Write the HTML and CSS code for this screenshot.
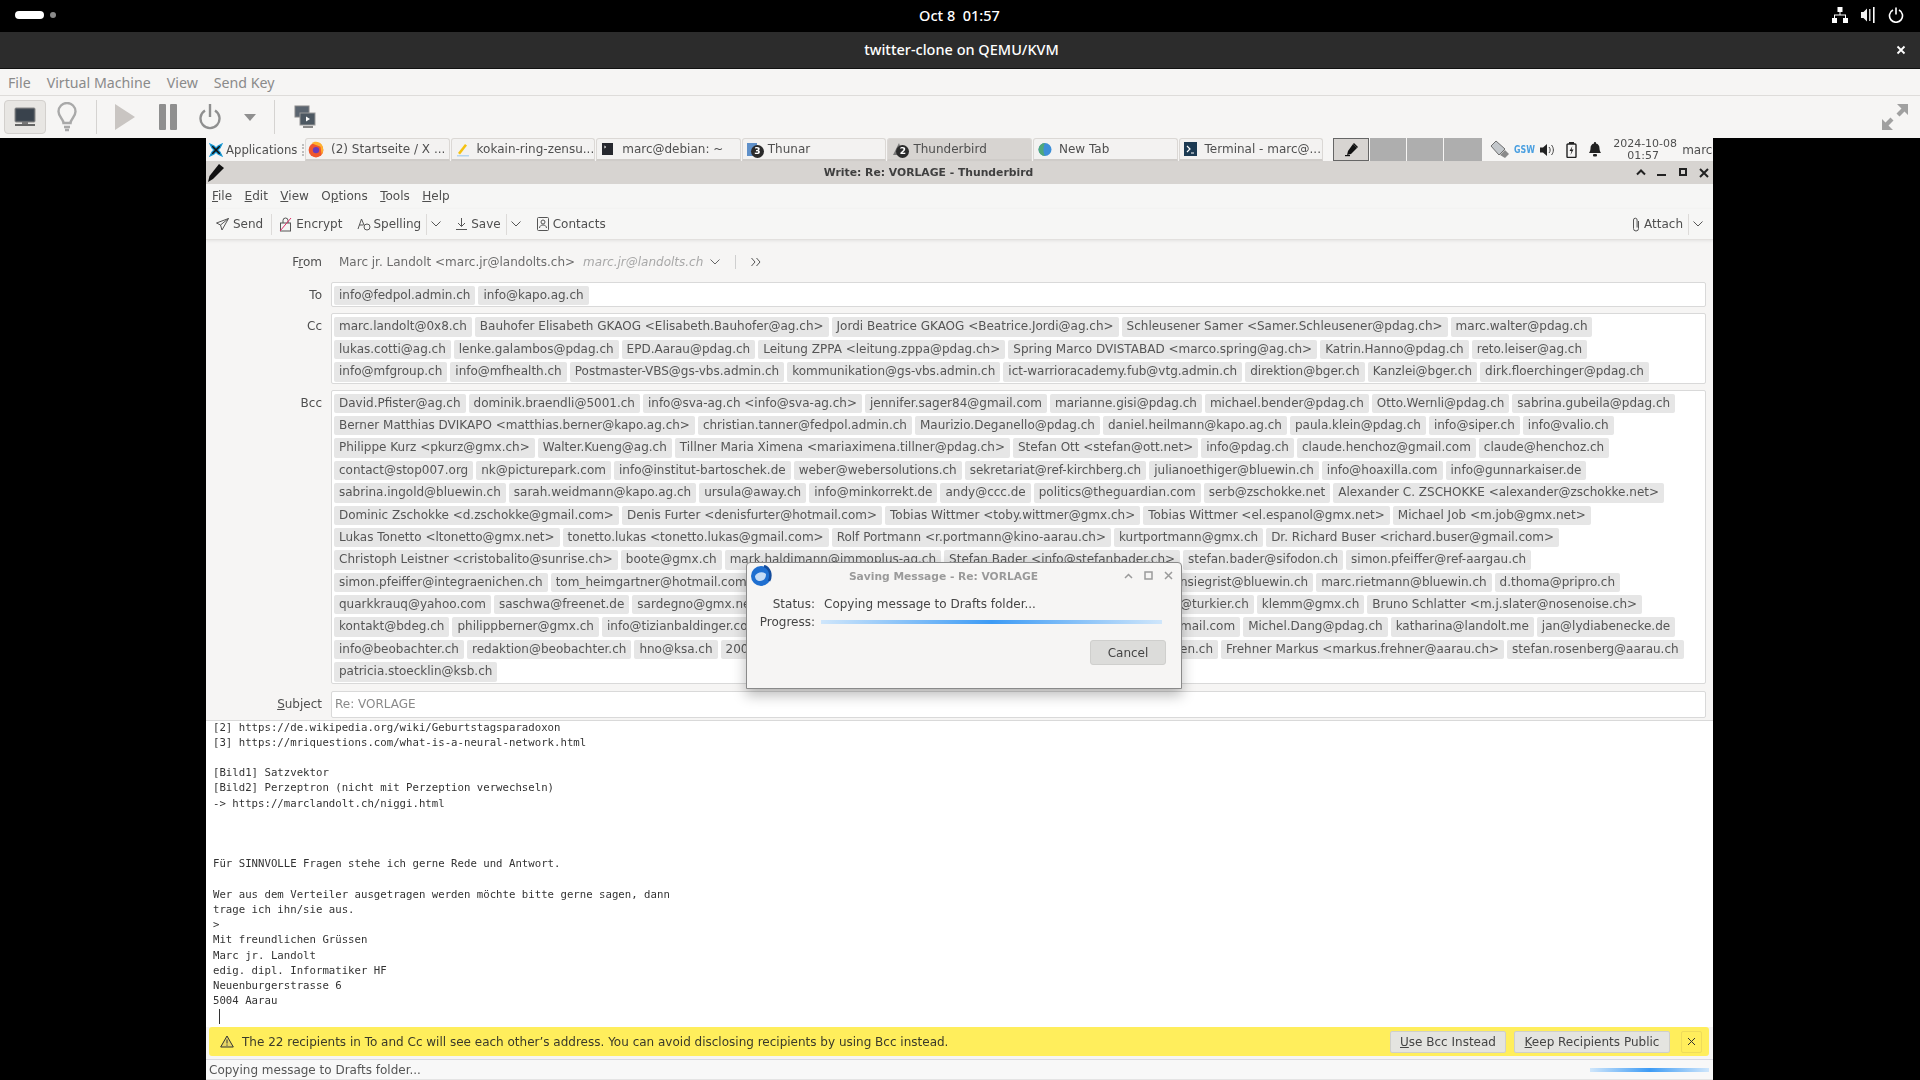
FILE: index.html
```html
<!DOCTYPE html>
<html>
<head>
    <title>twitter-clone on QEMU/KVM</title>
    <meta charset="UTF-8">
    <link rel="stylesheet" href="styles.css">
</head>
<body>
    <!-- host desktop -->
    <div class="top-bar">
        <div class="activities"><span class="pill"></span><span class="dot"></span></div>
        <div class="clock">Oct 8&nbsp; 01:57</div>
        <div class="status-icons">
            <svg width="16" height="16" viewBox="0 0 16 16" fill="#fff"><rect x="5.5" y="0" width="5" height="5"/><rect x="0" y="11" width="5" height="5"/><rect x="11" y="11" width="5" height="5"/><path d="M7.5 5h1v2.5h5.5V11h-1V8.5H3V11H2V7.5h5.5z"/></svg>
            <svg width="16" height="16" viewBox="0 0 16 16" fill="#fff"><path d="M1 5h2.5L7 1.500v13L3.500 11H1z" opacity=".95"/><rect x="9" y="2" width="1.5" height="12" opacity=".8"/><rect x="13" y="0" width="1.6" height="16"/></svg>
            <svg width="16" height="16" viewBox="0 0 16 16" fill="none" stroke="#fff" stroke-width="1.6"><path d="M5 3a6.5 6.5 0 1 0 6 0"/><path d="M8 0.5v7"/></svg>
        </div>
    </div>
    <div class="vm-title">
        <span>twitter-clone on QEMU/KVM</span>
        <svg class="vm-close" width="10" height="10" viewBox="0 0 10 10" stroke="#fff" stroke-width="1.8"><path d="M1.5 1.5l7 7M8.5 1.5l-7 7"/></svg>
    </div>
    <div class="vm-menu">
        <span>File</span><span>Virtual Machine</span><span>View</span><span>Send Key</span>
    </div>
    <div class="vm-toolbar">
        <div class="vm-btn active">
            <svg width="22" height="22" viewBox="0 0 22 22"><rect x="1" y="2" width="20" height="14" rx="1" fill="#4a5158" stroke="#888"/><rect x="2.5" y="3.5" width="17" height="11" fill="#39424c"/><rect x="8" y="16" width="6" height="2" fill="#777"/><rect x="1" y="18" width="20" height="2" fill="#666"/></svg>
        </div>
        <div class="vm-btn">
            <svg width="20" height="30" viewBox="0 0 20 30" fill="none" stroke="#a9a9a9" stroke-width="2.4"><path d="M6.5 21c0-4-5-6-5-11.5a8.5 8.5 0 0 1 17 0C18.5 15 13.5 17 13.5 21z"/><path d="M7 25h6M8 28h4"/></svg>
        </div>
        <span class="vm-sep first"></span>
        <div class="vm-btn wide">
            <svg width="20" height="26" viewBox="0 0 20 26" fill="#c9c5c2"><path d="M0 0l20 13L0 26z"/></svg>
        </div>
        <div class="vm-btn wide">
            <svg width="18" height="26" viewBox="0 0 18 26" fill="#8f8f8f"><rect width="7" height="26" rx="1"/><rect x="11" width="7" height="26" rx="1"/></svg>
        </div>
        <div class="vm-btn wide">
            <svg width="22" height="26" viewBox="0 0 22 26" fill="none" stroke="#8f8f8f" stroke-width="2.4"><path d="M6 6.5a9.500 9.500 0 1 0 10 0"/><path d="M11 0v13"/></svg>
        </div>
        <div class="vm-btn narrow">
            <svg width="12" height="7" viewBox="0 0 12 7" fill="#8f8f8f"><path d="M0 0h12L6 7z"/></svg>
        </div>
        <span class="vm-sep last"></span>
        <div class="vm-btn">
            <svg width="22" height="24" viewBox="0 0 22 24"><rect x="1" y="1" width="14" height="11" fill="#5b6570" stroke="#888"/><rect x="6" y="8" width="15" height="12" fill="#4d5862" stroke="#999"/><path d="M12 11.5l4 2.5-4 2.5z" fill="#fff"/><rect x="9" y="21" width="10" height="2" fill="#888"/></svg>
        </div>
        <svg class="vm-fullscreen" width="26" height="26" viewBox="0 0 26 26" fill="#a0a0a0"><path d="M15 0h11v11l-3.5-3.5-5 5-3-3 5-5zM0 26V15l3.5 3.5 5-5 3 3-5 5L11 26z"/></svg>
    </div>

    <!-- guest screen -->
    <div class="guest-row">
        <div class="guest">
            <div class="panel">
                <div class="launcher">
                    <svg width="14" height="14" viewBox="0 0 14 14"><path d="M1 1l4 2 2 2 2-2 4-2-2 4-2 2 2 2 2 4-4-2-2-2-2 2-4 2 2-4 2-2-2-2z" fill="#111" stroke="#1a9bd7" stroke-width="1.2"/></svg>
                    <span>Applications</span>
                    <span class="handle"></span>
                </div>
                <div class="tab">
                    <svg class="tab-icon firefox" width="16" height="17" viewBox="0 0 14 15"><circle cx="7" cy="8" r="6.5" fill="#f0562b"/><path d="M3 2c2-2 7-2 9 1 2 3 1.5 7 0 9l-1-7z" fill="#ffb02e"/><circle cx="7" cy="8" r="2.8" fill="#6b3bb8"/></svg>
                    <span>(2) Startseite / X ...</span>
                </div>
                <div class="tab">
                    <svg class="tab-icon" width="14" height="15" viewBox="0 0 14 15"><path d="M2 11l7-9 2 1.5-7 9z" fill="#f5c211"/><rect x="1" y="13" width="12" height="1.5" fill="#b5d4ef"/></svg>
                    <span>kokain-ring-zensu...</span>
                </div>
                <div class="tab">
                    <svg class="tab-icon" width="14" height="14" viewBox="0 0 14 14"><rect x="1" y="1" width="11" height="12" fill="#26282e"/><path d="M3 4l2 1-2 1" stroke="#ccc" fill="none"/></svg>
                    <span>marc@debian: ~</span>
                </div>
                <div class="tab">
                    <svg class="tab-icon" width="12" height="15" viewBox="0 0 12 15"><rect y="1" width="10" height="13" fill="#5f90c9"/></svg>
                    <span class="tab-badge">3</span>
                    <span>Thunar</span>
                </div>
                <div class="tab current">
                    <svg class="tab-icon" width="12" height="15" viewBox="0 0 12 15"><path d="M1 13L7 1l4 12z" fill="#777"/></svg>
                    <span class="tab-badge">2</span>
                    <span>Thunderbird</span>
                </div>
                <div class="tab">
                    <svg class="tab-icon" width="14" height="15" viewBox="0 0 14 15"><circle cx="7" cy="7.5" r="6.5" fill="#3d8fd8"/><path d="M7 1a6.5 6.5 0 0 0 0 13c-2-3-2-9 0-13z" fill="#4fa87a"/></svg>
                    <span>New Tab</span>
                </div>
                <div class="tab">
                    <svg class="tab-icon" width="14" height="14" viewBox="0 0 14 14"><rect width="13" height="14" fill="#1c3a52"/><path d="M3 4l3 3-3 3" stroke="#fff" fill="none" stroke-width="1.2"/><path d="M7 11h3" stroke="#fff"/></svg>
                    <span>Terminal - marc@...</span>
                </div>
                <div class="workspaces">
                    <div class="ws current">
                        <svg width="15" height="15" viewBox="0 0 15 15" fill="#111"><path d="M9 2l4 4-6 6-4 1 1-4z"/><path d="M10 1l4 4-1 1-4-4z"/><rect x="1" y="13" width="5" height="1.2"/></svg>
                    </div>
                    <div class="ws"></div>
                    <div class="ws"></div>
                    <div class="ws last"></div>
                </div>
                <div class="tray">
                    <svg class="tray-usb" width="20" height="19" viewBox="0 0 20 19"><path d="M1 6l5-5 9 8-6 6z" fill="#c3c7cb" stroke="#6f6f6f"/><path d="M10 15l5-5 4 4-4 4z" fill="#8a8a8a"/></svg>
                    <span class="gsw">GSW</span>
                    <svg class="tray-sound" width="15" height="14" viewBox="0 0 15 14"><path d="M0 4.5h3L7 1v12L3 9.500H0z" fill="#222"/><path d="M9 4c1.5 1.5 1.5 4.500 0 6M11.500 2c2.5 3 2.5 7 0 10" stroke="#444" fill="none"/></svg>
                    <svg class="tray-batt" width="11" height="16" viewBox="0 0 11 16"><rect x="3" y="0" width="5" height="2" fill="#222"/><rect x="1" y="2" width="9" height="13.5" rx="1" fill="none" stroke="#222" stroke-width="1.4"/><path d="M6.5 4L3.5 9h2l-1 4 3-5.500h-2z" fill="#222"/></svg>
                    <svg class="tray-bell" width="12" height="15" viewBox="0 0 12 15" fill="#222"><path d="M6 0c.6 0 1 .4 1 1v.6c2.3.5 3.500 2.300 3.500 4.900 0 2.500 1 3.500 1.500 4.500H0c.5-1 1.500-2 1.500-4.500 0-2.600 1.200-4.400 3.500-4.900V1c0-.6.4-1 1-1z"/><rect x="4" y="12" width="4" height="2.5" rx="1"/></svg>
                    <div class="tray-date">2024-10-08<br>01:57</div>
                    <span class="tray-user">marc</span>
                </div>
            </div>

            <div class="win-title">
                <svg class="win-pen" width="18" height="20" viewBox="0 0 18 20" fill="#111"><path d="M12 1l5 4L6 16l-5 3 1.500-6z"/></svg>
                <span>Write: Re: VORLAGE - Thunderbird</span>
                <div class="win-btns">
                    <svg width="10" height="8" viewBox="0 0 10 8" fill="none" stroke="#222" stroke-width="2"><path d="M1 6.5l4-4 4 4"/></svg>
                    <svg width="10" height="8" viewBox="0 0 10 8" fill="#222"><rect y="6" width="9" height="2"/></svg>
                    <svg width="10" height="8" viewBox="0 0 10 8" fill="none" stroke="#222" stroke-width="2"><rect x="2" y="1" width="6" height="6"/></svg>
                    <svg width="10" height="10" viewBox="0 0 10 10" fill="none" stroke="#222" stroke-width="2"><path d="M1 1l8 8M9 1L1 9"/></svg>
                </div>
            </div>

            <div class="menu-bar">
                <span><u>F</u>ile</span><span><u>E</u>dit</span><span><u>V</u>iew</span><span>O<u>p</u>tions</span><span><u>T</u>ools</span><span><u>H</u>elp</span>
            </div>

            <div class="compose-toolbar">
                <button class="tool send">
                    <svg width="13" height="13" viewBox="0 0 13 13" fill="none" stroke="#555"><path d="M12.5.5L.5 5l4 2 1.500 5zM12.5.5L4.500 7"/></svg>Send
                </button>
                <span class="tool-sep"></span>
                <button class="tool encrypt">
                    <svg width="13" height="15" viewBox="0 0 13 15" fill="none" stroke="#555"><rect x="1.5" y="6" width="10" height="8"/><path d="M4 6V3.5a2.500 2.500 0 0 1 5 0V6"/><path d="M1 14L12 1" stroke="#e0306a"/></svg>Encrypt
                </button>
                <button class="tool spelling">
                    <svg width="14" height="14" viewBox="0 0 14 14" fill="none" stroke="#555"><path d="M1 12L4.5 2 7 8"/><path d="M2.5 8h4"/><circle cx="10" cy="10" r="3"/></svg>Spelling
                </button>
                <span class="tool-sep"></span>
                <svg class="chev" width="10" height="6" viewBox="0 0 10 6" fill="none" stroke="#555"><path d="M.5.5L5 5 9.5.5"/></svg>
                <button class="tool save">
                    <svg width="11" height="12" viewBox="0 0 11 12" fill="none" stroke="#555"><path d="M5.5 0v8M2 5l3.500 3.500L9 5M0 11.500h11"/></svg>Save
                </button>
                <span class="tool-sep"></span>
                <svg class="chev" width="10" height="6" viewBox="0 0 10 6" fill="none" stroke="#555"><path d="M.5.5L5 5 9.5.5"/></svg>
                <button class="tool contacts">
                    <svg width="12" height="14" viewBox="0 0 12 14" fill="none" stroke="#555"><rect x=".5" y=".5" width="11" height="13" rx="1"/><circle cx="6" cy="5" r="2"/><path d="M2.5 11c0-4 7-4 7 0"/></svg>Contacts
                </button>
                <button class="tool attach">
                    <svg width="8" height="15" viewBox="0 0 8 15" fill="none" stroke="#555"><path d="M6.5 4v7.500a2.500 2.500 0 0 1-5 0V3a1.800 1.800 0 0 1 3.600 0v7.500"/></svg>Attach
                </button>
                <span class="tool-sep"></span>
                <svg class="chev" width="10" height="6" viewBox="0 0 10 6" fill="none" stroke="#555"><path d="M.5.5L5 5 9.5.5"/></svg>
            </div>

            <div class="headers">
                <div class="field from-field">
                    <label><span>F<u>r</u>om</span></label>
                    <div class="from-value">
                        <span>Marc jr. Landolt &lt;marc.jr@landolts.ch&gt;</span>
                        <em>marc.jr@landolts.ch</em>
                        <svg width="10" height="6" viewBox="0 0 10 6" fill="none" stroke="#666"><path d="M.5.5L5 5 9.5.5"/></svg>
                        <span class="from-sep"></span>
                        <svg width="10" height="10" viewBox="0 0 10 10" fill="none" stroke="#555"><path d="M.5 1L4 5 .5 9M5.5 1L9 5 5.500 9"/></svg>
                    </div>
                </div>
                <div class="field">
                    <label><span>To</span></label>
                    <div class="box">
                        <div class="chip-row"><span class="chip">info@fedpol.admin.ch</span><span class="chip">info@kapo.ag.ch</span></div>
                    </div>
                </div>
                <div class="field">
                    <label><span>Cc</span></label>
                    <div class="box">
                        <div class="chip-row"><span class="chip">marc.landolt@0x8.ch</span><span class="chip">Bauhofer Elisabeth GKAOG &lt;Elisabeth.Bauhofer@ag.ch&gt;</span><span class="chip">Jordi Beatrice GKAOG &lt;Beatrice.Jordi@ag.ch&gt;</span><span class="chip">Schleusener Samer &lt;Samer.Schleusener@pdag.ch&gt;</span><span class="chip">marc.walter@pdag.ch</span></div>
                        <div class="chip-row"><span class="chip">lukas.cotti@ag.ch</span><span class="chip">lenke.galambos@pdag.ch</span><span class="chip">EPD.Aarau@pdag.ch</span><span class="chip">Leitung ZPPA &lt;leitung.zppa@pdag.ch&gt;</span><span class="chip">Spring Marco DVISTABAD &lt;marco.spring@ag.ch&gt;</span><span class="chip">Katrin.Hanno@pdag.ch</span><span class="chip">reto.leiser@ag.ch</span></div>
                        <div class="chip-row"><span class="chip">info@mfgroup.ch</span><span class="chip">info@mfhealth.ch</span><span class="chip">Postmaster-VBS@gs-vbs.admin.ch</span><span class="chip">kommunikation@gs-vbs.admin.ch</span><span class="chip">ict-warrioracademy.fub@vtg.admin.ch</span><span class="chip">direktion@bger.ch</span><span class="chip">Kanzlei@bger.ch</span><span class="chip">dirk.floerchinger@pdag.ch</span></div>
                    </div>
                </div>
                <div class="field">
                    <label><span>Bcc</span></label>
                    <div class="box">
                        <div class="chip-row"><span class="chip">David.Pfister@ag.ch</span><span class="chip">dominik.braendli@5001.ch</span><span class="chip">info@sva-ag.ch &lt;info@sva-ag.ch&gt;</span><span class="chip">jennifer.sager84@gmail.com</span><span class="chip">marianne.gisi@pdag.ch</span><span class="chip">michael.bender@pdag.ch</span><span class="chip">Otto.Wernli@pdag.ch</span><span class="chip">sabrina.gubeila@pdag.ch</span></div>
                        <div class="chip-row"><span class="chip">Berner Matthias DVIKAPO &lt;matthias.berner@kapo.ag.ch&gt;</span><span class="chip">christian.tanner@fedpol.admin.ch</span><span class="chip">Maurizio.Deganello@pdag.ch</span><span class="chip">daniel.heilmann@kapo.ag.ch</span><span class="chip">paula.klein@pdag.ch</span><span class="chip">info@siper.ch</span><span class="chip">info@valio.ch</span></div>
                        <div class="chip-row"><span class="chip">Philippe Kurz &lt;pkurz@gmx.ch&gt;</span><span class="chip">Walter.Kueng@ag.ch</span><span class="chip">Tillner Maria Ximena &lt;mariaximena.tillner@pdag.ch&gt;</span><span class="chip">Stefan Ott &lt;stefan@ott.net&gt;</span><span class="chip">info@pdag.ch</span><span class="chip">claude.henchoz@gmail.com</span><span class="chip">claude@henchoz.ch</span></div>
                        <div class="chip-row"><span class="chip">contact@stop007.org</span><span class="chip">nk@picturepark.com</span><span class="chip">info@institut-bartoschek.de</span><span class="chip">weber@webersolutions.ch</span><span class="chip">sekretariat@ref-kirchberg.ch</span><span class="chip">julianoethiger@bluewin.ch</span><span class="chip">info@hoaxilla.com</span><span class="chip">info@gunnarkaiser.de</span></div>
                        <div class="chip-row"><span class="chip">sabrina.ingold@bluewin.ch</span><span class="chip">sarah.weidmann@kapo.ag.ch</span><span class="chip">ursula@away.ch</span><span class="chip">info@minkorrekt.de</span><span class="chip">andy@ccc.de</span><span class="chip">politics@theguardian.com</span><span class="chip">serb@zschokke.net</span><span class="chip">Alexander C. ZSCHOKKE &lt;alexander@zschokke.net&gt;</span></div>
                        <div class="chip-row"><span class="chip">Dominic Zschokke &lt;d.zschokke@gmail.com&gt;</span><span class="chip">Denis Furter &lt;denisfurter@hotmail.com&gt;</span><span class="chip">Tobias Wittmer &lt;toby.wittmer@gmx.ch&gt;</span><span class="chip">Tobias Wittmer &lt;el.espanol@gmx.net&gt;</span><span class="chip">Michael Job &lt;m.job@gmx.net&gt;</span></div>
                        <div class="chip-row"><span class="chip">Lukas Tonetto &lt;ltonetto@gmx.net&gt;</span><span class="chip">tonetto.lukas &lt;tonetto.lukas@gmail.com&gt;</span><span class="chip">Rolf Portmann &lt;r.portmann@kino-aarau.ch&gt;</span><span class="chip">kurtportmann@gmx.ch</span><span class="chip">Dr. Richard Buser &lt;richard.buser@gmail.com&gt;</span></div>
                        <div class="chip-row"><span class="chip">Christoph Leistner &lt;cristobalito@sunrise.ch&gt;</span><span class="chip">boote@gmx.ch</span><span class="chip">mark.haldimann@immoplus-ag.ch</span><span class="chip">Stefan Bader &lt;info@stefanbader.ch&gt;</span><span class="chip">stefan.bader@sifodon.ch</span><span class="chip">simon.pfeiffer@ref-aargau.ch</span></div>
                        <!-- these rows run behind the dialog: only the parts left and right of it are visible -->
                        <div class="chip-row">
                            <div class="row-left"><span class="chip">simon.pfeiffer@integraenichen.ch</span><span class="chip">tom_heimgartner@hotmail.com</span></div>
                            <div class="row-right"><span class="chip cut">nsiegrist@bluewin.ch</span><span class="chip">marc.rietmann@bluewin.ch</span><span class="chip">d.thoma@pripro.ch</span></div>
                        </div>
                        <div class="chip-row">
                            <div class="row-left"><span class="chip">quarkkrauq@yahoo.com</span><span class="chip">saschwa@freenet.de</span><span class="chip">sardegno@gmx.ne</span></div>
                            <div class="row-right"><span class="chip cut">@turkier.ch</span><span class="chip">klemm@gmx.ch</span><span class="chip">Bruno Schlatter &lt;m.j.slater@nosenoise.ch&gt;</span></div>
                        </div>
                        <div class="chip-row">
                            <div class="row-left"><span class="chip">kontakt@bdeg.ch</span><span class="chip">philippberner@gmx.ch</span><span class="chip">info@tizianbaldinger.co</span></div>
                            <div class="row-right"><span class="chip cut">mail.com</span><span class="chip">Michel.Dang@pdag.ch</span><span class="chip">katharina@landolt.me</span><span class="chip">jan@lydiabenecke.de</span></div>
                        </div>
                        <div class="chip-row">
                            <div class="row-left"><span class="chip">info@beobachter.ch</span><span class="chip">redaktion@beobachter.ch</span><span class="chip">hno@ksa.ch</span><span class="chip">200</span></div>
                            <div class="row-right"><span class="chip cut">en.ch</span><span class="chip">Frehner Markus &lt;markus.frehner@aarau.ch&gt;</span><span class="chip">stefan.rosenberg@aarau.ch</span></div>
                        </div>
                        <div class="chip-row"><span class="chip">patricia.stoecklin@ksb.ch</span></div>
                    </div>
                </div>
                <div class="field subject-field">
                    <label><span><u>S</u>ubject</span></label>
                    <div class="box subject">Re: VORLAGE</div>
                </div>
            </div>

            <div class="message-body">
<pre>[2] https://de.wikipedia.org/wiki/Geburtstagsparadoxon
[3] https://mriquestions.com/what-is-a-neural-network.html

[Bild1] Satzvektor
[Bild2] Perzeptron (nicht mit Perzeption verwechseln)
-&gt; https://marclandolt.ch/niggi.html



Für SINNVOLLE Fragen stehe ich gerne Rede und Antwort.

Wer aus dem Verteiler ausgetragen werden möchte bitte gerne sagen, dann
trage ich ihn/sie aus.
&gt;
Mit freundlichen Grüssen
Marc jr. Landolt
edig. dipl. Informatiker HF
Neuenburgerstrasse 6
5004 Aarau</pre>
                <span class="caret"></span>
            </div>

            <div class="notice">
                <svg width="14" height="13" viewBox="0 0 14 13" fill="#e8d766" stroke="#333"><path d="M7 1l6.3 11H.7z"/><path d="M7 4.5v4M7 9.5v1.2" fill="none"/></svg>
                <span class="notice-text">The 22 recipients in To and Cc will see each other’s address. You can avoid disclosing recipients by using Bcc instead.</span>
                <button class="notice-btn bcc"><u>U</u>se Bcc Instead</button>
                <button class="notice-btn public"><u>K</u>eep Recipients Public</button>
                <button class="notice-close">
                    <svg width="9" height="9" viewBox="0 0 9 9" stroke="#333"><path d="M1 1l7 7M8 1L1 8"/></svg>
                </button>
            </div>

            <div class="status-bar">
                <span>Copying message to Drafts folder...</span>
                <span class="status-progress"></span>
            </div>

            <!-- progress dialog on top of the compose window -->
            <div class="dialog">
                <div class="dialog-title">
                    <svg class="dialog-logo" width="22" height="22" viewBox="0 0 22 22"><circle cx="11" cy="11" r="10" fill="#1f6fd0"/><path d="M14 1c6 2 8 9 5 15" stroke="#124b9c" stroke-width="2.5" fill="none"/><path d="M5 11c2-4 8-5 11-2 0 5-3 7-6 7-3 0-5-2-5-5z" fill="#c6dcf5"/></svg>
                    <span>Saving Message - Re: VORLAGE</span>
                    <div class="dialog-btns">
                        <svg width="9" height="6" viewBox="0 0 9 6" fill="none" stroke="#9a9a9a" stroke-width="1.5"><path d="M1 5l3.500-3.500L8 5"/></svg>
                        <svg width="9" height="9" viewBox="0 0 9 9" fill="none" stroke="#9a9a9a" stroke-width="1.5"><rect x="1" y="1" width="7" height="7"/></svg>
                        <svg width="9" height="9" viewBox="0 0 9 9" fill="none" stroke="#9a9a9a" stroke-width="1.5"><path d="M1 1l7 7M8 1L1 8"/></svg>
                    </div>
                </div>
                <div class="dialog-row status-row">
                    <span class="dialog-label">Status:</span>
                    <span>Copying message to Drafts folder...</span>
                </div>
                <div class="dialog-row progress-row">
                    <span class="dialog-label">Progress:</span>
                    <span class="dialog-progress"></span>
                </div>
                <div class="dialog-actions">
                    <button class="cancel-btn">Cancel</button>
                </div>
            </div>
        </div>
    </div>
</body>
</html>
```

FILE: styles.css
```css
* {
    box-sizing: border-box;
}

html, body {
    margin: 0;
    height: 1080px;
    overflow: hidden;
    background: #000;
}

body {
    font-family: "Noto Sans", "DejaVu Sans", sans-serif;
    display: flex;
    flex-direction: column;
}

svg {
    flex: none;
    display: block;
}

/* host desktop */
.top-bar {
    height: 32px;
    background: #000;
    color: #fff;
    display: grid;
    grid-template-columns: 1fr auto 1fr;
    align-items: center;
    padding: 0 16px 2px 15px;
}

.activities {
    display: flex;
    align-items: center;
    gap: 6px;
}

.pill {
    width: 29px;
    height: 8px;
    border-radius: 4px;
    background: #fff;
}

.dot {
    width: 6px;
    height: 6px;
    border-radius: 50%;
    background: #8a8a8a;
}

.clock {
    font-size: 14.5px;
    font-weight: 500;
}

.status-icons {
    display: flex;
    justify-content: flex-end;
    gap: 12px;
}

.vm-title {
    position: relative;
    height: 37px;
    background: #2c2c2c;
    border-bottom: 1px solid #111;
    color: #fff;
    font-size: 14.5px;
    font-weight: 500;
    display: flex;
    align-items: center;
    justify-content: center;
    padding: 0 0 2px 3px;
}

.vm-close {
    position: absolute;
    right: 14px;
    top: 13px;
}

.vm-menu {
    height: 27px;
    background: #f6f5f4;
    border-bottom: 1px solid #dedcda;
    color: #8a8a8a;
    font-size: 14.2px;
    display: flex;
    align-items: center;
    gap: 16px;
    padding-left: 8px;
}

.vm-toolbar {
    height: 42px;
    background: #f6f5f4;
    display: flex;
    align-items: center;
    padding: 0 4px;
}

.vm-btn {
    width: 42px;
    height: 34px;
    border-radius: 4px;
    display: flex;
    align-items: center;
    justify-content: center;
}

.vm-btn.active {
    background: #e8e6e3;
    border: 1px solid #d3d0cd;
}

.vm-btn.wide {
    width: 42.5px;
}

.vm-btn.narrow {
    width: 36px;
}

.vm-sep {
    width: 1px;
    height: 34px;
    background: #d5d3d1;
    margin: 0 6px;
}

.vm-sep.first {
    margin: 0 7.5px;
}

.vm-sep.last {
    margin-right: 9px;
}

.vm-fullscreen {
    margin-left: auto;
    margin-right: 8px;
}

/* guest screen */
.guest-row {
    flex: 1;
    display: flex;
    padding-left: 206px;
}

.guest {
    position: relative;
    width: 1507px;
    height: 942px;
    background: #f6f5f4;
    font-family: "DejaVu Sans", sans-serif;
    font-size: 12px;
    color: #4f4f4f;
    display: flex;
    flex-direction: column;
    overflow: hidden;
    filter: blur(0.3px);
}

.panel {
    height: 24px;
    background: #f6f5f4;
    border-bottom: 1px solid #d6d3d0;
    display: flex;
    align-items: stretch;
    gap: 1px;
}

.launcher {
    width: 98px;
    display: flex;
    align-items: center;
    gap: 3px;
    padding-left: 3px;
    font-size: 11.7px;
    white-space: nowrap;
    overflow: hidden;
}

.handle {
    height: 12px;
    margin-left: 2px;
    border-left: 2px dotted #bdbdbd;
}

.tab {
    position: relative;
    width: 144.6px;
    background: #f3f2f1;
    border: 1px solid #dbd8d5;
    border-bottom: 2px solid #cfccc9;
    border-radius: 3px 3px 0 0;
    display: flex;
    align-items: center;
    padding-left: 25px;
    white-space: nowrap;
    overflow: hidden;
}

.tab.current {
    background: #d7d4d1;
}

.tab-icon {
    position: absolute;
    left: 4px;
    top: 3px;
}

.tab-icon.firefox {
    left: 2px;
    top: 2px;
}

.tab-badge {
    position: absolute;
    left: 8px;
    top: 6px;
    width: 13px;
    height: 13px;
    border-radius: 50%;
    background: #2b2b2b;
    color: #fff;
    font-size: 9px;
    font-weight: 700;
    line-height: 13px;
    text-align: center;
}

.workspaces {
    display: flex;
    margin-left: 9px;
    gap: 1px;
}

.ws {
    width: 36px;
    background: #aeaeae;
}

.ws.last {
    width: 38px;
}

.ws.current {
    background: #d7d4d1;
    border: 1px solid #666;
    display: flex;
    align-items: center;
    justify-content: center;
}

.tray {
    flex: 1;
    display: flex;
    align-items: center;
    white-space: nowrap;
    overflow: hidden;
}

.tray-usb {
    margin-left: 7px;
}

.gsw {
    width: 20px;
    margin-left: 4px;
    color: #4a9fe0;
    font-size: 11px;
    font-weight: 700;
    transform: scaleX(0.72);
    transform-origin: left center;
}

.tray-sound {
    margin-left: 6px;
}

.tray-batt {
    margin-left: 11px;
}

.tray-bell {
    margin-left: 12px;
}

.tray-date {
    width: 60px;
    margin-left: 12px;
    font-size: 11px;
    line-height: 12px;
    text-align: center;
}

.tray-user {
    margin-left: 9px;
}

.win-title {
    position: relative;
    height: 22px;
    background: #d7d4d1;
    display: flex;
    align-items: center;
    justify-content: center;
    padding: 0 62px 2px 0;
    font-size: 10.8px;
    font-weight: 700;
    color: #3f3f3f;
}

.win-pen {
    position: absolute;
    left: 1px;
    top: 1px;
}

.win-btns {
    position: absolute;
    right: 4px;
    top: 6px;
    display: flex;
    gap: 11px;
}

.menu-bar {
    height: 25px;
    background: #f6f6f5;
    display: flex;
    align-items: center;
    gap: 12.5px;
    padding: 0 0 2px 6px;
}

.compose-toolbar {
    height: 31px;
    background: #f6f6f5;
    border-bottom: 1px solid #e2e0de;
    box-shadow: 0 1px 3px rgba(0, 0, 0, 0.08);
    display: flex;
    align-items: center;
    padding: 0 10px;
}

.tool {
    border: 0;
    padding: 0;
    background: none;
    font: inherit;
    color: inherit;
    display: flex;
    align-items: center;
    gap: 4px;
}

.tool-sep {
    width: 1px;
    height: 21px;
    background: #dddbd9;
    margin: 0 4px 0 5px;
}

.tool.send {
    margin-right: 3px;
}

.tool.encrypt {
    margin-left: 3px;
}

.tool.spelling {
    margin-left: 15px;
    gap: 2px;
}

.tool.save {
    margin-left: 15px;
}

.tool.contacts {
    margin-left: 16px;
}

.tool.attach {
    margin-left: auto;
}

/* recipient fields */
.headers {
    flex: none;
    padding: 0 7px 2px 0;
    border-bottom: 1px solid #d9d9d9;
    display: flex;
    flex-direction: column;
    gap: 6px;
}

.field {
    display: flex;
    align-items: flex-start;
}

.field label {
    flex: none;
    width: 125px;
    padding: 6px 9px 0 0;
    text-align: right;
}

.from-field {
    height: 43px;
    align-items: center;
    margin-bottom: -7px;
}

.from-field label {
    padding-top: 0;
}

.subject-field {
    margin-top: 1px;
}

.from-value {
    display: flex;
    align-items: center;
    padding-left: 8px;
    color: #6c6c6c;
}

.from-value em {
    margin-left: 8px;
    margin-right: 7px;
    color: #a8a8a8;
}

.from-sep {
    width: 1px;
    height: 14px;
    background: #cfcfcf;
    margin: 0 15px;
}

.box {
    flex: 1;
    min-width: 0;
    background: #fff;
    border: 1px solid #d9d9d9;
    border-radius: 2px;
    padding: 3px 3px 1px 2px;
    display: flex;
    flex-direction: column;
    gap: 3px;
}

.box.subject {
    display: block;
    height: 27px;
    padding: 5px 0 0 3px;
    color: #8a8a8a;
}

.chip-row {
    display: flex;
    gap: 3px;
    height: 19.4px;
}

.chip {
    flex: none;
    background: #e6e6e6;
    border-radius: 2px;
    padding: 0 5px;
    line-height: 18px;
    white-space: nowrap;
    color: #555;
}

.chip.cut {
    padding-left: 0;
    border-radius: 0 2px 2px 0;
}

.row-left {
    display: flex;
    gap: 3px;
    width: 413px;
    overflow: hidden;
}

.row-right {
    display: flex;
    gap: 3px;
    margin-left: 430px;
}

/* message */
.message-body {
    position: relative;
    flex: 1;
    min-height: 0;
    background: #fff;
    overflow: hidden;
}

.message-body pre {
    margin: -1px 0 0 7px;
    font-family: "DejaVu Sans Mono", monospace;
    font-size: 10.7px;
    line-height: 15.2px;
    color: #333;
}

.caret {
    position: absolute;
    left: 13px;
    top: 288px;
    width: 1px;
    height: 15px;
    background: #333;
}

.notice {
    height: 29px;
    margin: 0 4px 3px 3px;
    background: #ffee5c;
    border-radius: 3px;
    display: flex;
    align-items: center;
    padding: 0 7px 0 11px;
    color: #3a3a2a;
}

.notice-text {
    flex: 1;
    margin-left: 8px;
}

.notice-btn {
    height: 22px;
    padding: 0;
    background: #e4e4e0;
    border: 1px solid #cfcfcb;
    border-radius: 2px;
    font: inherit;
    color: #444;
}

.notice-btn.bcc {
    width: 116px;
}

.notice-btn.public {
    width: 156px;
    margin-left: 8px;
}

.notice-close {
    width: 21px;
    height: 22px;
    margin-left: 11px;
    padding: 0;
    background: #ffee5c;
    border: 1px solid #efdc5a;
    border-radius: 2px;
    display: flex;
    align-items: center;
    justify-content: center;
}

.status-bar {
    height: 21px;
    background: #f8f8f8;
    border-top: 1px solid #d9d9e0;
    border-bottom: 1px solid #e4e4e4;
    display: flex;
    align-items: center;
    justify-content: space-between;
    padding: 0 4px 0 3px;
    color: #555;
}

.status-progress {
    width: 119px;
    height: 4px;
    background: linear-gradient(90deg, #cfe6fb, #3d9bf5 50%, #cfe6fb);
}

/* dialog */
.dialog {
    position: absolute;
    left: 540px;
    top: 424px;
    width: 436px;
    height: 127px;
    background: #f6f5f4;
    border: 1px solid #8a8a8a;
    border-radius: 4px 4px 0 0;
    box-shadow: 0 6px 14px rgba(0, 0, 0, 0.28);
    display: flex;
    flex-direction: column;
}

.dialog-title {
    position: relative;
    height: 26px;
    flex: none;
    display: flex;
    align-items: center;
    justify-content: center;
    padding-right: 41px;
    color: #9a9a9a;
    font-size: 10.7px;
    font-weight: 700;
}

.dialog-logo {
    position: absolute;
    left: 3px;
    top: 2px;
}

.dialog-btns {
    position: absolute;
    right: 8px;
    top: 8px;
    display: flex;
    align-items: center;
    gap: 11px;
}

.dialog-row {
    display: flex;
    align-items: center;
    color: #454545;
}

.status-row {
    height: 20px;
    margin-top: 5px;
}

.progress-row {
    height: 16px;
}

.dialog-label {
    width: 68px;
    margin-right: 8px;
    text-align: right;
    flex: none;
}

.progress-row .dialog-label {
    margin-right: 6px;
}

.status-row .dialog-label {
    margin-right: 9px;
}

.dialog-progress {
    width: 341px;
    height: 4px;
    background: linear-gradient(90deg, #cfe6fb, #3d9bf5 50%, #cfe6fb);
}

.dialog-actions {
    display: flex;
    justify-content: flex-end;
    padding: 10px 15px 0 0;
}

.cancel-btn {
    width: 76px;
    height: 25px;
    background: #dcdcda;
    border: 1px solid #cfcfcd;
    border-radius: 3px;
    font: inherit;
    color: #444;
}
```
